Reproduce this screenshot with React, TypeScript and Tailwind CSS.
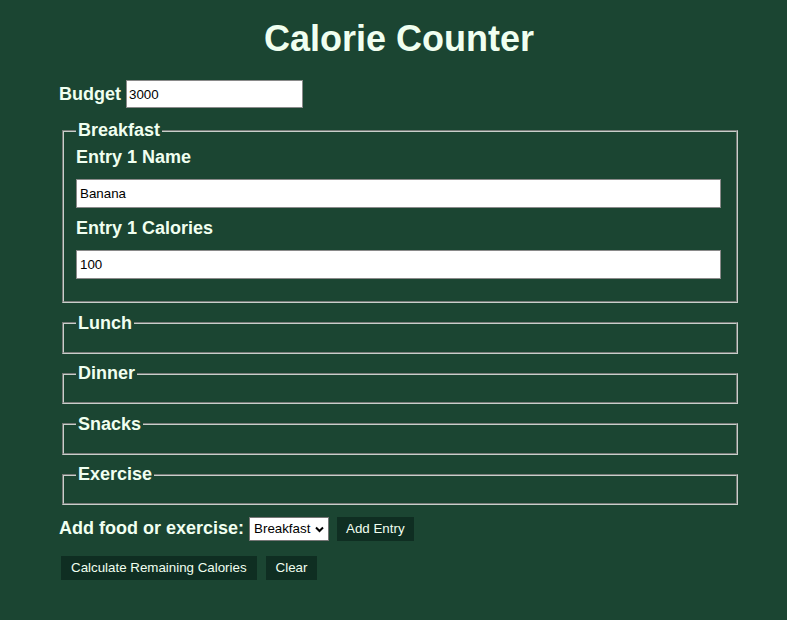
import React from "react";

const font = { fontFamily: '"Liberation Sans", Arial, sans-serif' };

function Section({ title, children }: { title: string; children?: React.ReactNode }) {
  return (
    <fieldset className="mx-[2px] border-2 [border-style:groove] border-[#c8cfca] px-3 pt-[6px] pb-[12px] mb-[9.5px]">
      <legend className="px-[2px] text-[18px] leading-[21px] font-bold text-[#f0fff0]">{title}</legend>
      {children}
    </fieldset>
  );
}

export default function App() {
  return (
    <div style={font} className="min-h-[620px] w-full bg-[#1b4532] text-[#f0fff0]">
      <h1 className="pt-[18px] pl-[11px] text-center text-[36px] leading-[41px] font-bold">Calorie Counter</h1>
      <div className="ml-[59px] w-[681px] pt-[21px]">
        <div className="flex items-center">
          <label className="text-[18px] leading-[21px] font-bold">Budget</label>
          <input
            readOnly
            value="3000"
            className="ml-[5px] h-[28px] w-[177px] border border-[#8a8a8a] bg-white px-[2px] text-[13.33px] text-black outline-none"
          />
        </div>
        <div className="mt-[12px] ml-[1px]">
          <Section title="Breakfast">
            <label className="mt-[0px] block text-[18px] leading-[21px] font-bold">Entry 1 Name</label>
            <input
              readOnly
              value="Banana"
              className="mt-[11px] block h-[29px] w-[645px] border border-[#8a8a8a] bg-white px-[3px] text-[13.33px] text-black outline-none"
            />
            <label className="mt-[10px] block text-[18px] leading-[21px] font-bold">Entry 1 Calories</label>
            <input
              readOnly
              value="100"
              className="mt-[11px] mb-[10px] block h-[29px] w-[645px] border border-[#8a8a8a] bg-white px-[3px] text-[13.33px] text-black outline-none"
            />
          </Section>
          <Section title="Lunch" />
          <Section title="Dinner" />
          <Section title="Snacks" />
          <Section title="Exercise" />
        </div>
        <div className="mt-[11.5px] flex items-center">
          <label className="text-[18px] leading-[21px] font-bold">Add food or exercise:</label>
          <div className="relative ml-[5px] flex h-[24px] w-[80px] items-center border border-[#767676] bg-white pl-[4px] text-[13.33px] text-black">
            Breakfast
            <svg className="absolute right-[4px] top-[8px]" width="9" height="7" viewBox="0 0 9 7">
              <path d="M1 1.5 L4.5 5 L8 1.5" stroke="#000" strokeWidth="2" fill="none" />
            </svg>
          </div>
          <button className="ml-[8px] h-[24px] bg-[#0f2e22] px-[9px] text-[13.33px] text-[#f0fff0]">Add Entry</button>
        </div>
        <div className="mt-[15px] ml-[2px] flex items-center">
          <button className="h-[24px] bg-[#0f2e22] px-[10px] text-[13.33px] text-[#f0fff0]">Calculate Remaining Calories</button>
          <button className="ml-[9px] h-[24px] bg-[#0f2e22] px-[10px] text-[13.33px] text-[#f0fff0]">Clear</button>
        </div>
      </div>
    </div>
  );
}
